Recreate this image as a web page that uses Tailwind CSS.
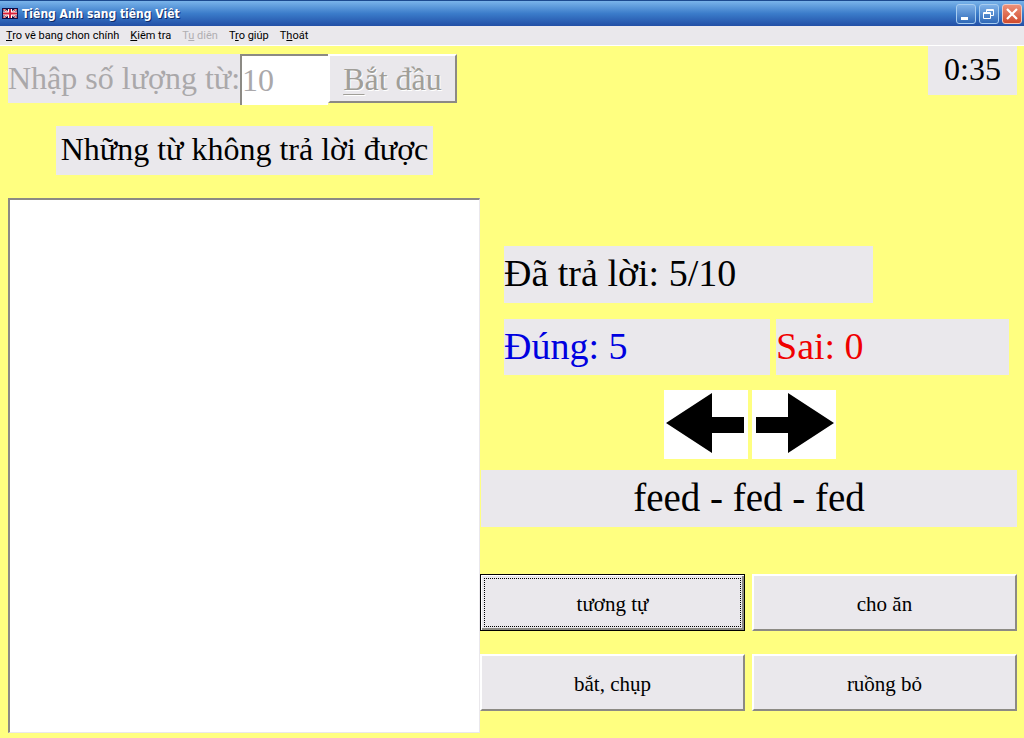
<!DOCTYPE html>
<html lang="vi">
<head>
<meta charset="utf-8">
<meta name="viewport" content="width=device-width, initial-scale=1">
<title>Tiêng Anh sang tiêng Viêt</title>
<script src="https://cdn.jsdelivr.net/npm/@tailwindcss/browser@4"></script>
</head>
<body class="flex min-h-screen flex-col bg-[#ffff80] font-['Liberation_Serif',serif] text-black">
<header>
  <div class="flex h-[26px] items-center border-t border-[#1c4a90] bg-linear-to-b from-[#7ab4ea] via-[#3b7cca] via-50% to-[#234fa6] px-[2px] font-['DejaVu_Sans_Condensed','DejaVu_Sans',sans-serif]">
    <svg class="h-[11px] w-4 shrink-0" viewBox="0 0 16 11" aria-hidden="true">
      <rect width="16" height="11" fill="#10104a"/>
      <path d="M1 1 15 10M15 1 1 10" stroke="#fff" stroke-width="2"/>
      <path d="M1 1 15 10M15 1 1 10" stroke="#d33" stroke-width="1"/>
      <path d="M8 0V11M0 5.500H16" stroke="#fff" stroke-width="4"/>
      <path d="M8 0V11M0 5.500H16" stroke="#d8203a" stroke-width="2"/>
      <rect x=".5" y=".5" width="15" height="10" fill="none" stroke="#10104a"/>
    </svg>
    <h1 class="ml-1 grow text-[12px] leading-4 font-bold text-white [text-shadow:1px_1px_0_#102a66]">Tiêng Anh sang tiêng Viêt</h1>
    <div class="flex gap-[3px]">
      <button aria-label="Minimize" class="flex size-5 items-center justify-center rounded-[3px] border border-[#a8cdf0] bg-linear-to-b from-[#7fb2e8] to-[#2f69b8]">
        <svg class="size-[18px]" viewBox="0 0 18 18"><path d="M4 12h7v3H4z" fill="#fff"/></svg>
      </button>
      <button aria-label="Restore" class="flex size-5 items-center justify-center rounded-[3px] border border-[#a8cdf0] bg-linear-to-b from-[#7fb2e8] to-[#2f69b8]">
        <svg class="size-[18px]" viewBox="0 0 18 18" fill="none" stroke="#fff"><path d="M6.500 7V4.500h7v6H11M6 5.500h8M3.500 7.500h7v6h-7zM3 8.500h8"/></svg>
      </button>
      <button aria-label="Close" class="flex size-5 items-center justify-center rounded-[3px] border border-[#f0c8c0] bg-linear-to-b from-[#ec9078] to-[#d04a2c]">
        <svg class="size-[18px]" viewBox="0 0 18 18" stroke="#fff" stroke-width="2.200"><path d="M4 4l10 10M14 4L4 14"/></svg>
      </button>
    </div>
  </div>
  <nav class="flex h-5 items-center gap-[11px] border-b border-white bg-[#eae8ec] px-[6px] font-['Roboto',sans-serif] text-[11px] leading-4">
    <button><u>T</u>ro vê bang chon chính</button>
    <button><u>K</u>iêm tra</button>
    <button disabled class="text-[#b0aeb2]">T<u>u</u> diên</button>
    <button>T<u>r</u>o giúp</button>
    <button>T<u>h</u>oát</button>
  </nav>
</header>

<main class="grid grow grid-cols-[472fr_537fr] pr-[7px] pb-[5px] pl-2">
  <section class="flex flex-col pt-2">
    <form class="flex items-start">
      <label for="count" class="h-[49px] w-[232px] bg-[#eae8ec] text-[32px] leading-[48px] whitespace-nowrap text-[#aaa8aa]">Nhập số lượng từ:</label>
      <input id="count" type="text" value="10" disabled class="h-[51px] w-[88px] border-t-2 border-l-2 border-[#8c8a84] bg-white text-[32px] text-[#aaa8aa]">
      <button type="button" disabled class="h-[49px] w-[129px] border-2 border-t-white border-r-[#8c8a84] border-b-[#8c8a84] border-l-white bg-[#eae8ec] text-[32px] leading-[44px] text-[#a09e98] [text-shadow:1px_1px_0_#fff]"><span class="underline decoration-1 underline-offset-4">B</span>ắt đầu</button>
    </form>
    <h2 id="missed" class="mt-[21px] ml-12 h-[49px] w-[377px] bg-[#eae8ec] text-center text-[32px] leading-[46px] whitespace-nowrap">Những từ không trả lời được</h2>
    <ul aria-labelledby="missed" class="mt-[23px] grow border border-t-2 border-l-2 border-t-[#8c8a84] border-r-[#eae8ec] border-b-[#eae8ec] border-l-[#8c8a84] bg-white"></ul>
  </section>

  <section class="flex flex-col">
    <time class="h-[49px] w-[89px] self-end bg-[#eae8ec] text-center text-[32px] leading-[46px]">0:35</time>
    <div class="mt-[151px] mr-2 ml-6 flex flex-col gap-4 text-[38px] leading-[54px]">
      <p class="h-[57px] w-[369px] bg-[#eae8ec]">Đã trả lời: 5/10</p>
      <div class="flex gap-[6px]">
        <p class="h-14 grow-[266] basis-0 bg-[#eae8ec] text-[#0000e0]">Đúng: 5</p>
        <p class="h-14 grow-[233] basis-0 bg-[#eae8ec] text-[#f00000]">Sai: 0</p>
      </div>
    </div>
    <div class="mt-[15px] ml-[2px] flex justify-center gap-1">
      <button aria-label="Từ trước" class="bg-white"><svg class="h-[69px] w-[84px]" viewBox="0 0 84 69"><path d="M2 33 48 3V27H80V43H48V63Z"/></svg></button>
      <button aria-label="Từ sau" class="bg-white"><svg class="h-[69px] w-[84px]" viewBox="0 0 84 69"><path d="M82 33 36 3V27H4V43H36V63Z"/></svg></button>
    </div>
    <p class="mt-[11px] ml-px h-[57px] bg-[#eae8ec] text-center text-[39px] leading-[56px]">feed - fed - fed</p>
    <div class="mt-[47px] grid grid-cols-2 gap-x-[7px] gap-y-[23px] text-[21px] leading-6">
      <button class="h-[57px] border border-black bg-[#eae8ec] p-[3px] shadow-[inset_1px_1px_0_#fff,inset_-2px_-2px_0_#8c8a84]"><span class="flex h-full items-center justify-center border border-dotted border-black pt-[2px]">tương tự</span></button>
      <button class="h-[57px] border-2 border-t-white border-r-[#8c8a84] border-b-[#8c8a84] border-l-white bg-[#eae8ec] pt-[2px]">cho ăn</button>
      <button class="h-[57px] border-2 border-t-white border-r-[#8c8a84] border-b-[#8c8a84] border-l-white bg-[#eae8ec] pt-[2px]">bắt, chụp</button>
      <button class="h-[57px] border-2 border-t-white border-r-[#8c8a84] border-b-[#8c8a84] border-l-white bg-[#eae8ec] pt-[2px]">ruồng bỏ</button>
    </div>
  </section>
</main>
</body>
</html>
